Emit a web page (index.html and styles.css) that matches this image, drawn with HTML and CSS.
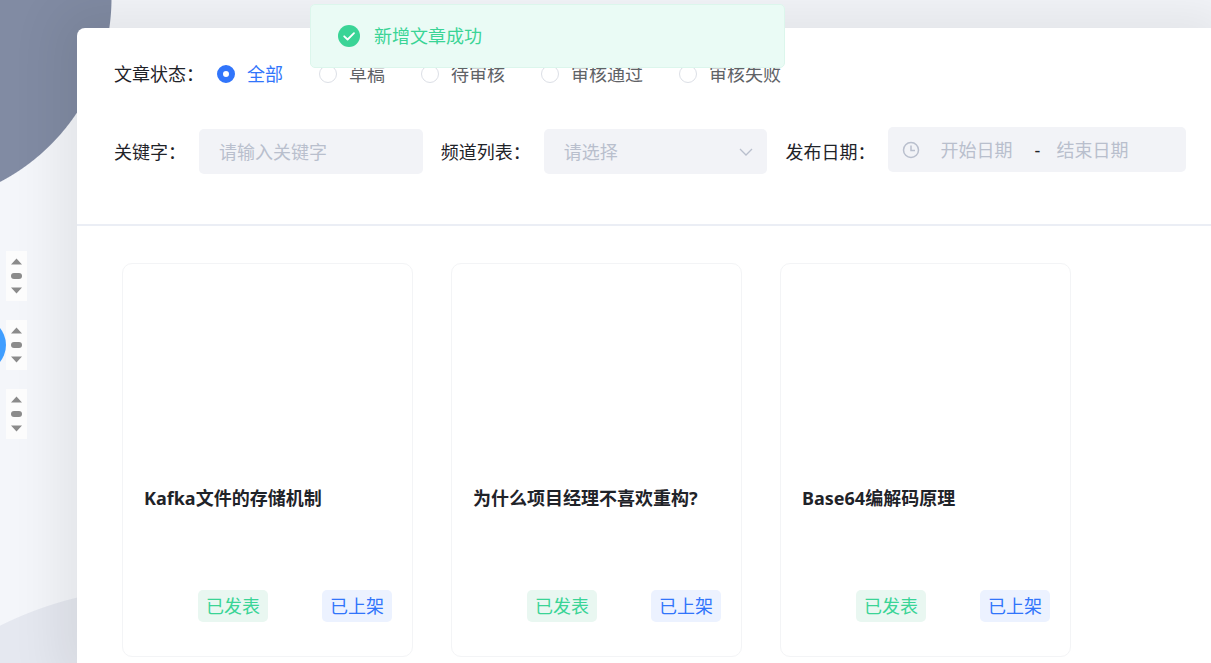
FILE: index.html
```html
<!DOCTYPE html>
<html lang="zh-CN">
<head>
<meta charset="utf-8">
<title>文章列表</title>
<link rel="stylesheet" href="styles.css">
</head>
<body>
<div class="message" role="status">
  <svg class="message-icon" viewBox="0 0 22 22" aria-hidden="true"><circle cx="11" cy="11" r="11" fill="#3ad496"/><path d="M6.2 11.3 9.6 14.5 16 8.2" fill="none" stroke="#fff" stroke-width="1.8" stroke-linecap="round" stroke-linejoin="round"/></svg>
  <p class="message-text">新增文章成功</p>
</div>
<div class="app">
  <aside class="sidebar">
    <div class="handle"><svg viewBox="0 0 21 50"><path d="M5 13.5h11L10.500 7.500zM5 36.500h11L10.500 42.500z"/><rect x="5" y="22" width="11" height="6" rx="3"/></svg></div>
    <div class="handle handle-active"><svg viewBox="0 0 21 50"><path d="M5 13.5h11L10.500 7.500zM5 36.500h11L10.500 42.500z"/><rect x="5" y="22" width="11" height="6" rx="3"/></svg></div>
    <div class="handle"><svg viewBox="0 0 21 50"><path d="M5 13.5h11L10.500 7.500zM5 36.500h11L10.500 42.500z"/><rect x="5" y="22" width="11" height="6" rx="3"/></svg></div>
  </aside>
  <main class="panel">
    <form class="filters">
      <div class="field" role="radiogroup" aria-labelledby="status-label">
        <span class="label" id="status-label">文章状态：</span>
        <div class="radios">
          <label class="radio"><input type="radio" name="status" checked><span>全部</span></label>
          <label class="radio"><input type="radio" name="status"><span>草稿</span></label>
          <label class="radio"><input type="radio" name="status"><span>待审核</span></label>
          <label class="radio"><input type="radio" name="status"><span>审核通过</span></label>
          <label class="radio"><input type="radio" name="status"><span>审核失败</span></label>
        </div>
      </div>
      <div class="filter-row">
        <label class="label" for="keyword">关键字：</label>
        <input class="control" id="keyword" type="text" placeholder="请输入关键字">
        <label class="label" for="channel">频道列表：</label>
        <div class="control select-box">
          <select class="select" id="channel"><option>请选择</option></select>
          <svg class="chevron" viewBox="0 0 14 8" aria-hidden="true"><path d="M1 1l6 6 6-6"/></svg>
        </div>
        <label class="label" for="start">发布日期：</label>
        <div class="control date-range">
          <svg class="clock" viewBox="0 0 18 18" aria-hidden="true"><circle cx="9" cy="9" r="7.500"/><path d="M9 4.500V9.500h4"/></svg>
          <input class="date" id="start" type="text" placeholder="开始日期">
          <span class="dash">-</span>
          <input class="date" type="text" placeholder="结束日期" aria-label="结束日期">
        </div>
      </div>
    </form>
    <section class="cards">
      <article class="card">
        <div class="cover"></div>
        <h2 class="title">Kafka文件的存储机制</h2>
        <div class="tags"><span class="tag tag-green">已发表</span><span class="tag tag-blue">已上架</span></div>
      </article>
      <article class="card">
        <div class="cover"></div>
        <h2 class="title">为什么项目经理不喜欢重构?</h2>
        <div class="tags"><span class="tag tag-green">已发表</span><span class="tag tag-blue">已上架</span></div>
      </article>
      <article class="card">
        <div class="cover"></div>
        <h2 class="title">Base64编解码原理</h2>
        <div class="tags"><span class="tag tag-green">已发表</span><span class="tag tag-blue">已上架</span></div>
      </article>
    </section>
  </main>
</div>
</body>
</html>
```

FILE: styles.css
```css
* { box-sizing: border-box; }

body {
  margin: 0;
  font-family: "Noto Sans", "Noto Sans CJK SC", sans-serif;
  font-size: 18px;
  font-weight: 400;
  line-height: 24px;
  color: #1f2329;
}

input, select { font: inherit; color: inherit; }

.app {
  display: flex;
  min-height: 100vh;
  overflow: hidden;
  background:
    radial-gradient(circle at -96px -2px, #818ba3 207px, transparent 208px),
    radial-gradient(circle at 162px 950px, #e5e8f0 362px, transparent 363px),
    #f4f6fa;
}

.sidebar {
  position: relative;
  z-index: 2;
  flex: 0 0 77px;
  display: flex;
  flex-direction: column;
  gap: 19px;
  padding: 251px 0 0 6px;
}

.handle {
  position: relative;
  width: 21px;
  height: 50px;
  background: #fcfcfc;
}

.handle svg {
  display: block;
  width: 21px;
  height: 50px;
  fill: #8b8b8b;
}

.handle-active::before {
  content: "";
  position: absolute;
  z-index: -1;
  top: -2px;
  left: -54px;
  width: 54px;
  height: 54px;
  border-radius: 50%;
  background: #409eff;
}

.panel {
  position: relative;
  flex: 1;
  min-width: 0;
  margin-top: 28px;
  background: #fff;
  border-top-left-radius: 8px;
  box-shadow: 0 0 50px 20px rgba(0, 0, 0, 0.07);
}

.filters {
  padding: 34px 25px 48px 37px;
  border-bottom: 2px solid #ebeef5;
}

.field {
  display: flex;
  align-items: center;
  gap: 13px;
  margin-bottom: 41px;
}

.label { white-space: nowrap; }

.filter-row .label:not(:first-child) { margin-left: 5px; }

.radios {
  display: flex;
  gap: 36px;
}

.radio {
  display: flex;
  align-items: center;
  gap: 12px;
  color: #606266;
  white-space: nowrap;
}

.radio input {
  appearance: none;
  width: 18px;
  height: 18px;
  margin: 0;
  border: 1px solid #dcdfe6;
  border-radius: 50%;
  background: #fff;
}

.radio input:checked { border: 6px solid #3175fb; }
.radio input:checked + span { color: #3175fb; }

.filter-row {
  display: flex;
  align-items: center;
  gap: 13px;
}

.control {
  flex: 1 1 224px;
  min-width: 0;
  height: 45px;
  padding: 0 20px;
  border: 0;
  border-radius: 5px;
  outline: 0;
  background: #f2f3f7;
}

::placeholder {
  color: #b9bfcd;
  opacity: 1;
}

.select-box {
  display: flex;
  align-items: center;
  padding-right: 14px;
}

.select {
  appearance: none;
  flex: 1;
  min-width: 0;
  padding: 0;
  border: 0;
  background: none;
  color: #b9bfcd;
}

.chevron {
  width: 14px;
  height: 8px;
  fill: none;
  stroke: #b9bfcd;
  stroke-width: 1.3;
}

.date-range {
  flex-basis: 298px;
  display: flex;
  align-items: center;
  margin-bottom: 4px;
  padding: 0 14px;
}

.clock {
  flex: none;
  width: 18px;
  height: 18px;
  margin-right: 20px;
  fill: none;
  stroke: #b9bfcd;
  stroke-width: 1.5;
}

.date {
  flex: 1;
  min-width: 0;
  padding: 0;
  border: 0;
  outline: 0;
  background: none;
}

.date:first-of-type { flex: 0 0 94px; }

.dash {
  flex: none;
  width: 22px;
}

.cards {
  display: grid;
  grid-template-columns: repeat(auto-fill, 291px);
  gap: 38px;
  padding: 37px 45px 6px;
}

.card {
  padding: 0 20px 34px;
  border: 1px solid #f3f4f6;
  border-radius: 10px;
}

.cover { height: 222px; }

.title {
  margin: 0 0 80px;
  padding-left: 1px;
  font-size: 18px;
  font-weight: 700;
  line-height: 24px;
}

.tags {
  display: flex;
  justify-content: flex-end;
  gap: 54px;
}

.tag {
  padding: 0 8px;
  border-radius: 5px;
  line-height: 32px;
}

.tag-green { background: #e9f7f1; color: #3ad496; }
.tag-blue { background: #ecf2ff; color: #3175fb; }

.message {
  position: fixed;
  z-index: 10;
  top: 4px;
  left: 310px;
  display: flex;
  align-items: center;
  gap: 14px;
  width: 475px;
  padding: 19px 27px;
  border: 1px solid #dcf6ec;
  border-radius: 5px;
  background: #eafbf5;
}

.message-icon {
  width: 22px;
  height: 22px;
}

.message-text {
  margin: 0;
  color: #3ad496;
}
```
